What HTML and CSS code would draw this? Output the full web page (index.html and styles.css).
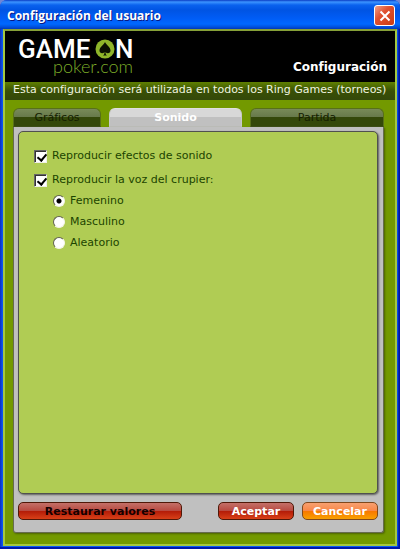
FILE: index.html
```html
<!DOCTYPE html>
<html lang="es">
<head>
<meta charset="utf-8">
<title>Configuración del usuario</title>
<link rel="stylesheet" href="styles.css">
</head>
<body>
<div class="window">
  <header class="titlebar">
    <h1>Configuración del usuario</h1>
    <button class="close" type="button" aria-label="Cerrar">
      <svg viewBox="0 0 12 12" width="12" height="12"><path d="M1.5 1.5 10.5 10.5M10.5 1.5 1.5 10.5" stroke="#fff" stroke-width="2" fill="none"/></svg>
    </button>
  </header>
  <form class="client">
    <div class="brand">
      <svg class="logo" viewBox="0 0 118 50" width="118" height="50" role="img">
        <text class="logo-main" x="-1" y="27">GAME</text>
        <circle cx="86" cy="18" r="9.5" fill="#8fb52a"/>
        <path d="M86 11C85 14 80.500 16 80.500 19.500C80.500 22.500 84 23 85.500 21C85.500 23 85 24 84 24.500H88C87 24 86.500 23 86.500 21C88 23 91.500 22.500 91.500 19.500C91.500 16 87 14 86 11Z" fill="#0a1000"/>
        <text class="logo-main" x="96" y="27">N</text>
        <text class="logo-sub" x="34" y="42">poker.com</text>
      </svg>
      <h2>Configuración</h2>
    </div>
    <p class="notice">Esta configuración será utilizada en todos los Ring Games (torneos)</p>
    <div class="content">
      <nav class="tabs">
        <button class="tab" type="button">Gráficos</button>
        <button class="tab tab-active" type="button">Sonido</button>
        <button class="tab" type="button">Partida</button>
      </nav>
      <div class="panel">
        <div class="options">
          <label><input type="checkbox" checked>Reproducir efectos de sonido</label>
          <label><input type="checkbox" checked>Reproducir la voz del crupier:</label>
          <div class="voices">
            <label><input type="radio" name="voz" checked>Femenino</label>
            <label><input type="radio" name="voz">Masculino</label>
            <label><input type="radio" name="voz">Aleatorio</label>
          </div>
        </div>
        <div class="actions">
          <button class="btn btn-reset" type="button">Restaurar valores</button>
          <button class="btn btn-ok" type="button">Aceptar</button>
          <button class="btn btn-cancel" type="button">Cancelar</button>
        </div>
      </div>
    </div>
  </form>
</div>
</body>
</html>
```
FILE: styles.css
```css
* { box-sizing: border-box; }
body {
  margin: 0;
  background: #6f86d6;
  font: 11px/14px "DejaVu Sans", sans-serif;
}
h1, h2, p { margin: 0; }
button { font: inherit; padding: 0; cursor: pointer; }
.window {
  display: flex;
  flex-direction: column;
  min-height: 100vh;
  padding: 0 3px 3px;
  border-radius: 7px 7px 0 0;
  background: linear-gradient(90deg, #0a2fc0, #0b5cf5 3px, #0b5cf5 calc(100% - 3px), #0014a0 calc(100% - 1px));
  box-shadow: inset 0 -2px #0018a8;
}
.titlebar {
  display: flex;
  align-items: center;
  justify-content: space-between;
  height: 29px;
  margin: 0 -3px;
  padding: 2px 5px 0 7px;
  border-radius: 7px 7px 0 0;
  background: linear-gradient(#0a3cc4, #3c94ff 2px, #0a62ee 5px, #0054e3 10px, #005cf5 18px, #0068ff 24px, #0050dc 27px, #0038b8);
}
h1 {
  color: #fff;
  font: bold 12px/18px "Open Sans", sans-serif;
  text-shadow: 1px 1px #0a1883;
}
.close {
  display: grid;
  place-items: center;
  width: 21px;
  height: 21px;
  border: 1px solid #fff;
  border-radius: 3px;
  background: linear-gradient(135deg, #f0a088, #e05030 40%, #c83c14);
}
.client {
  flex: 1;
  display: flex;
  flex-direction: column;
  border: 2px solid #a4c840;
  border-top-color: #86a038;
  background: #739900;
}
.brand {
  display: flex;
  justify-content: space-between;
  align-items: flex-end;
  height: 51px;
  padding: 0 8px 7px 14px;
  background: #000;
}
.logo { align-self: flex-start; overflow: visible; }
.logo-main { font: 500 26px Roboto, sans-serif; fill: #fff; }
.logo-sub { font: 300 18px Lato, sans-serif; fill: #7cac28; }
h2 { color: #fff; font: bold 12px/16px "DejaVu Sans", sans-serif; }
.notice {
  height: 18px;
  padding: 0 0 0 8px;
  color: #f0f4e0;
  line-height: 16px;
  white-space: nowrap;
  background: linear-gradient(#5f8000, #395005 50%, #34480a);
}
.content {
  flex: 1;
  display: flex;
  flex-direction: column;
  padding: 8px 11px 11px 8px;
}
.tabs {
  display: grid;
  grid-template-columns: 88fr 133fr 134fr;
  gap: 8px;
}
.tab {
  height: 19px;
  border: 1px solid #587018;
  border-bottom: 1px solid #3c4c18;
  border-radius: 6px 6px 0 0;
  color: #142000;
  background: linear-gradient(#788a58, #66784a 50%, #34480a 50%, #34480a);
}
.tab-active {
  border-color: #e0e0e0 #c8c8c8 #c0c0c0;
  color: #fff;
  font-weight: bold;
  background: linear-gradient(#d8d8d8 50%, #c0c0c0 50%);
}
.panel {
  flex: 1;
  display: flex;
  flex-direction: column;
  padding: 4px 5px 12px 4px;
  border: 1px solid #666b50;
  border-top: 0;
  border-radius: 0 0 3px 3px;
  background: #c0c0c0;
  box-shadow: 1px 1px 2px #4c6400;
}
.options {
  flex: 1;
  display: flex;
  flex-direction: column;
  align-items: flex-start;
  gap: 10px;
  padding: 17px 15px;
  border: 1px solid #505050;
  border-radius: 5px;
  color: #1c4400;
  background: #b0cc54;
  box-shadow: 1px 1px 2px #606060;
}
label { display: flex; align-items: center; gap: 5px; }
input { appearance: none; flex: none; width: 12px; height: 12px; margin: 0; }
input[type="checkbox"] {
  width: 13px;
  height: 13px;
  border: 1px solid;
  border-color: #666 #f0f0e8 #f0f0e8 #666;
  background: #fff;
  box-shadow: inset 1px 1px #333;
}
input[type="checkbox"]:checked::after {
  content: "";
  display: block;
  width: 4px;
  height: 7px;
  margin: 1px 0 0 4px;
  border: solid #000;
  border-width: 0 2px 2px 0;
  transform: rotate(40deg);
}
input[type="radio"] {
  border: 1px solid;
  border-color: #606050 #f4f4e8 #f4f4e8 #606050;
  border-radius: 50%;
  background: #fff;
}
input[type="radio"]:checked { background: radial-gradient(circle, #000 2px, #fff 3px); }
.voices { display: grid; gap: 7px; margin: -3px 0 0 19px; }
.actions { display: flex; gap: 8px; padding-top: 8px; }
.btn {
  height: 18px;
  border: 1px solid #501808;
  border-radius: 5px;
  color: #fff;
  font-weight: bold;
  line-height: 15px;
  background: linear-gradient(#c47068, #b84a40 48%, #b41c08 52%, #d84018);
}
.btn-reset { flex: 0 0 164px; margin-right: auto; color: #140000; }
.btn-ok { flex: 0 0 76px; }
.btn-cancel {
  flex: 0 0 76px;
  border-color: #80481c;
  background: linear-gradient(#f8a070, #f88848 48%, #f87800 52%, #f8a000);
}
```
